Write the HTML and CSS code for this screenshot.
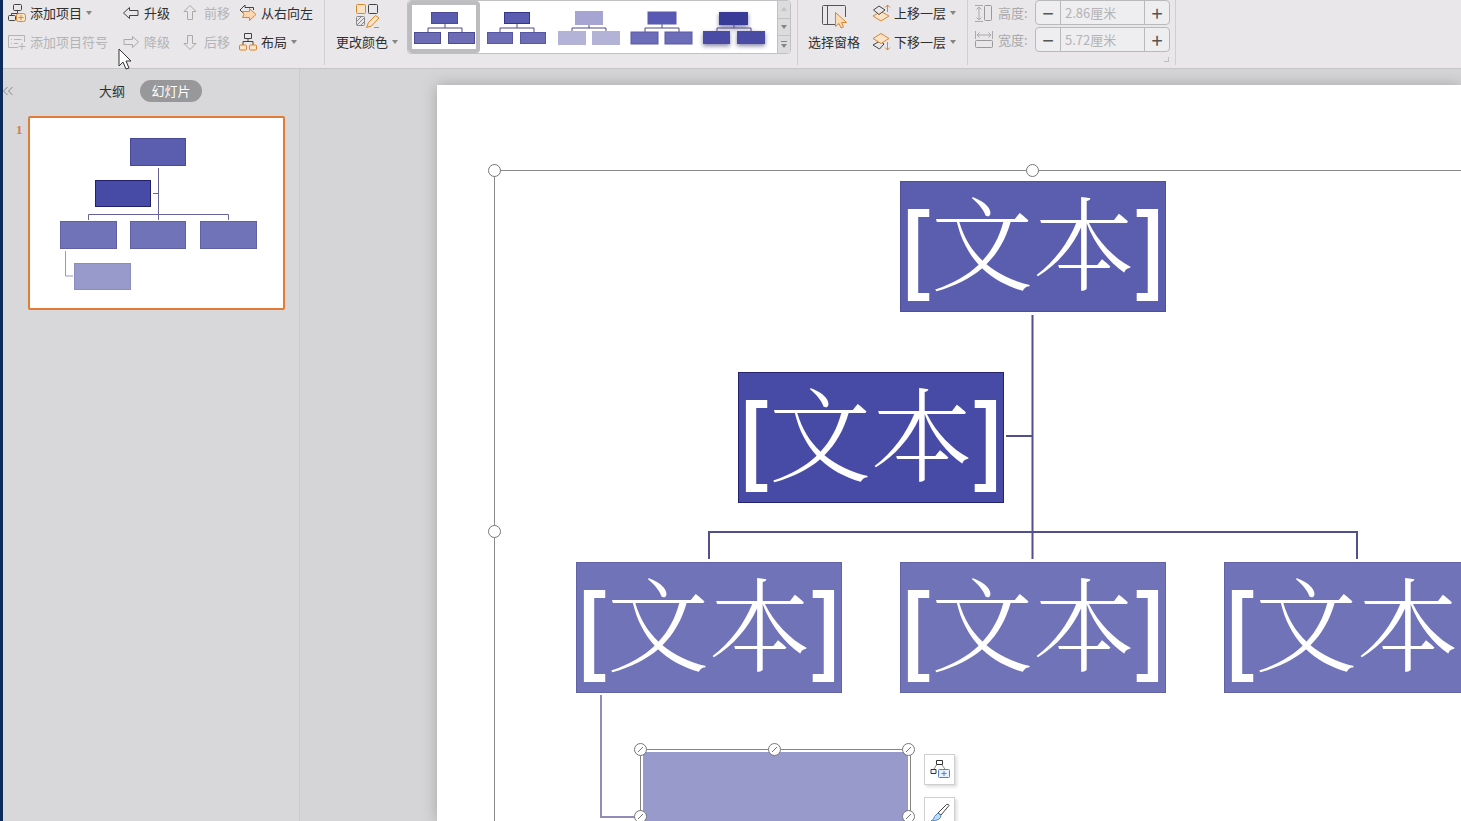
FILE: index.html
```html
<!DOCTYPE html>
<html lang="zh-CN">
<head>
<meta charset="utf-8">
<title>演示文稿</title>
<link rel="stylesheet" href="styles.css">
</head>
<body>
<div class="app">
  <header class="ribbon">
    <div class="group outline-tools">
      <button class="tool"><svg class="icon" viewBox="0 0 18 18"><g fill="none" stroke="#444"><rect x="5.500" y=".5" width="8" height="6" rx="1"/><path d="M9.500 6.500v3M3.500 12V9.500H13"/><rect x=".5" y="11.500" width="7" height="5" rx="1"/></g><rect x="8.500" y="9.500" width="9" height="8" rx="2" fill="#fbe3c8" stroke="#d9862e"/><path d="M10.500 13.500h5M13 11v5" stroke="#d9862e"/></svg>添加项目<i class="caret"></i></button>
      <button class="tool"><svg class="icon" viewBox="0 0 18 18"><path d="M1.500 9 7.500 3.500v3h8.500v5H7.500v3z" fill="none" stroke="#444" stroke-linejoin="round"/></svg>升级</button>
      <button class="tool" disabled><svg class="icon" viewBox="0 0 18 18"><path d="M8 1.500 2 7.500h3.500v8h5v-8H14z" fill="none" stroke="#aaa" stroke-linejoin="round"/></svg>前移</button>
      <button class="tool"><svg class="icon" viewBox="0 0 18 18"><path d="M1 6 6 1v2.500h8.500V6M1 6l4 4" fill="none" stroke="#444"/><path d="M3.500 7.500h7v-3l6.500 6-6.500 6v-3h-7l1.500-3z" fill="#fbd6ae" stroke="#d9862e" stroke-linejoin="round"/></svg>从右向左</button>
      <button class="tool" disabled><svg class="icon" viewBox="0 0 18 18"><path d="M16.500 9V2.500H.5v12H10M3 6.500h1M6 6.500h7.500M3 10.500h1M6 10.500h4M14 10v7M10.500 13.500h7" fill="none" stroke="#b4b3b5"/></svg>添加项目符号</button>
      <button class="tool" disabled><svg class="icon" viewBox="0 0 18 18"><path d="M16.500 9 10.500 3.500v3H2v5h8.500v3z" fill="none" stroke="#aaa" stroke-linejoin="round"/></svg>降级</button>
      <button class="tool" disabled><svg class="icon" viewBox="0 0 18 18"><path d="M8 16.500 2 10.500h3.500v-8h5v8H14z" fill="none" stroke="#aaa" stroke-linejoin="round"/></svg>后移</button>
      <button class="tool"><svg class="icon" viewBox="0 0 18 18"><path d="M5.500.5h7v5h-7zM9 5.500v3M4 12V8.500h10V12" fill="none" stroke="#444"/><rect x=".5" y="12" width="7" height="5" rx="1" fill="#fbe3c8" stroke="#d9862e"/><rect x="10.500" y="12" width="7" height="5" rx="1" fill="#fbe3c8" stroke="#d9862e"/></svg>布局<i class="caret"></i></button>
    </div>

    <div class="group style-tools">
      <button class="tool big"><svg class="icon-big" viewBox="0 0 26 26"><rect x="2.500" y="2.500" width="9" height="9" rx="1" fill="#fbe3c8" stroke="#d9862e"/><rect x="14.500" y="2.500" width="9" height="9" rx="1" fill="none" stroke="#444"/><rect x="2.500" y="14.500" width="8" height="9" rx="1" fill="none" stroke="#888"/><path d="m3 19 4-4M3 23l7-7M7 23l3-3" stroke="#888"/><path d="m12.500 25.500 2-5 7-7 3.500 2.500-7.500 8zM20 25.500h5" fill="#fbe3c8" stroke="#d9862e" stroke-linejoin="round"/></svg><span>更改颜色<i class="caret"></i></span></button>
      <div class="gallery">
        <button class="style-item selected" aria-label="样式 1"><svg viewBox="0 0 62 34"><path d="M31 12v4M14 20v-4h34v4" fill="none" stroke="#504b85"/><g fill="#6c6db5" stroke="#4b4c94"><rect x="17.500" y=".5" width="26" height="11" fill="#595caf"/><rect x=".5" y="20.500" width="26" height="11"/><rect x="34.500" y="20.500" width="26" height="11"/></g></svg></button>
        <button class="style-item" aria-label="样式 2"><svg viewBox="0 0 62 34"><path d="M31 12v4M14 20v-4h34v4" fill="none" stroke="#504b85"/><g fill="#6c6db5" stroke="#5556a4"><rect x="18.500" y=".5" width="25" height="11" fill="#595caf" stroke="#34368a"/><rect x="1.500" y="20.500" width="25" height="11"/><rect x="34.500" y="20.500" width="25" height="11"/></g></svg></button>
        <button class="style-item" aria-label="样式 3"><svg viewBox="0 0 62 34"><path d="M31 12v4M14 20v-4h34v4" fill="none" stroke="#504b85"/><g fill="#b3b2d7"><rect x="17" y="-1" width="28" height="14" fill="#a5a4d2"/><rect x="0" y="19" width="28" height="14"/><rect x="34" y="19" width="28" height="14"/></g></svg></button>
        <button class="style-item" aria-label="样式 4"><svg viewBox="0 0 62 34"><path d="M31 12v4M14 20v-4h34v4" fill="none" stroke="#504b85"/><g fill="#6c6db9" stroke="#5858a8"><rect x="17" y="0" width="28" height="12" fill="#5759b4"/><rect x="0" y="20" width="27" height="12"/><rect x="34" y="20" width="27" height="12"/></g></svg></button>
        <button class="style-item raised" aria-label="样式 5"><svg viewBox="0 0 62 34"><path d="M31 12v4M14 20v-4h34v4" fill="none" stroke="#504b85"/><g fill="#4a4ba4"><rect x="16" y="0" width="29" height="13" fill="#383a98"/><rect x="0" y="19" width="27" height="13"/><rect x="34" y="19" width="28" height="13"/></g></svg></button>
        <div class="gallery-scroll">
          <button aria-label="上翻" disabled><i class="caret up"></i></button>
          <button aria-label="下翻"><i class="caret"></i></button>
          <button aria-label="更多"><i class="more"></i><i class="caret"></i></button>
        </div>
      </div>
    </div>

    <div class="group arrange-tools">
      <button class="tool big"><svg class="icon-big" viewBox="0 0 26 26"><path d="M14 22.500H2.500a1 1 0 0 1-1-1v-17a1 1 0 0 1 1-1h21a1 1 0 0 1 1 1V15M6.500 3.500v19" fill="none" stroke="#555"/><path d="M14.500 10.500v14l3.500-3 2 4.500 2.500-1-2-4.500h5z" fill="#fbdcb8" stroke="#d9862e" stroke-linejoin="round"/></svg><span>选择窗格</span></button>
      <div class="stack">
        <button class="tool"><svg class="icon" viewBox="0 0 18 18"><path d="m1 12 8-4.500 8 4.500-8 5z" fill="#fbe3c8" stroke="#d9862e"/><path d="m1.500 6 5.500-4 6 4-6 4.500z" fill="#e9e7e9" stroke="#444"/><path d="M15.500 8V1M13 3.500 15.500 1 18 3.500" fill="none" stroke="#d9862e"/></svg>上移一层<i class="caret"></i></button>
        <button class="tool"><svg class="icon" viewBox="0 0 18 18"><path d="m1 12 7-4 4 3-4.500 5z" fill="none" stroke="#444"/><path d="m1 5.500 8-5 8 5-8 5z" fill="#fbe3c8" stroke="#d9862e"/><path d="M15.500 9v8M13 14.500l2.500 2.500 2.500-2.500" fill="none" stroke="#d9862e"/></svg>下移一层<i class="caret"></i></button>
      </div>
    </div>

    <div class="group size-tools">
      <div class="size-row"><svg class="icon" viewBox="0 0 18 18"><path d="M0 1.500h8M0 17.500h8M4 3v13M1.500 5.500 4 3l2.500 2.500M1.500 13.500 4 16l2.500-2.500" fill="none" stroke="#aaa"/><rect x="9.500" y="1.500" width="7" height="15" rx="1" fill="none" stroke="#999"/></svg><label for="h">高度:</label><div class="stepper"><button aria-label="减小高度">−</button><input id="h" value="2.86厘米"><button aria-label="增大高度">+</button></div></div>
      <div class="size-row"><svg class="icon" viewBox="0 0 18 18"><path d="M.5 0v8M17.500 0v8M2 4h14M4.500 1.500 2 4l2.500 2.500M13.500 1.500 16 4l-2.500 2.500" fill="none" stroke="#aaa"/><rect x=".5" y="9.500" width="17" height="7" rx="1" fill="none" stroke="#999"/></svg><label for="w">宽度:</label><div class="stepper"><button aria-label="减小宽度">−</button><input id="w" value="5.72厘米"><button aria-label="增大宽度">+</button></div></div>
      <i class="launcher"></i>
    </div>
    <svg class="cursor" viewBox="0 0 14 22"><path d="M1 1v17l4-4 3 7 3-1-3-7h5z" fill="#fff" stroke="#333"/></svg>
  </header>

  <div class="workspace">
    <aside class="panel">
      <div class="panel-head">
        <button class="collapse" aria-label="收起"><svg viewBox="0 0 12 10"><path d="M4.500 1 .5 5l4 4M9.500 1l-4 4 4 4" fill="none" stroke="#888"/></svg></button>
        <button class="tab">大纲</button>
        <button class="tab active">幻灯片</button>
      </div>
      <div class="slide-row">
        <span class="slide-no">1</span>
        <button class="slide-thumb" aria-label="幻灯片 1">
          <svg viewBox="0 0 253 190">
            <path d="M128.500 50v52M123 75.500h6M58.500 102v-5.500h140v5.500" fill="none" stroke="#66629a"/>
            <path d="M35.500 133v25H43" fill="none" stroke="#9997bd"/>
            <rect x="100.500" y="20.500" width="55" height="27" fill="#5b5eaf" stroke="#484a96"/>
            <rect x="65.500" y="62.500" width="55" height="26" fill="#474ba5" stroke="#20206e"/>
            <g fill="#7073b8" stroke="#6061a5"><rect x="30.500" y="103.500" width="56" height="27"/><rect x="100.500" y="103.500" width="55" height="27"/><rect x="170.500" y="103.500" width="56" height="27"/></g>
            <rect x="44.500" y="145.500" width="56" height="26" fill="#989acc" stroke="#8b8dc1"/>
          </svg>
        </button>
      </div>
    </aside>

    <main class="canvas">
      <div class="slide">
        <div class="frame"></div>
        <svg class="links" viewBox="0 0 1024 736">
          <g fill="none" stroke-width="2"><path d="M595.500 230v244M569 351h26M272 474v-27h648v27" stroke="#514f8d"/><path d="M164 610v122h40" stroke="#8f8db8"/></g>
        </svg>
        <div class="node n1"><b>[</b><span>文本</span><b>]</b></div>
        <div class="node assistant n2"><b>[</b><span>文本</span><b>]</b></div>
        <div class="node child n3"><b>[</b><span>文本</span><b>]</b></div>
        <div class="node child n4"><b>[</b><span>文本</span><b>]</b></div>
        <div class="node child n5"><b>[</b><span>文本</span></div>
        <div class="node-selection"><div class="node-fill"></div></div>
        <i class="handle f1"></i><i class="handle f2"></i><i class="handle f3"></i>
        <i class="handle lock s1"></i><i class="handle lock s2"></i><i class="handle lock s3"></i><i class="handle lock s4"></i><i class="handle lock s5"></i>
        <div class="floating">
          <button aria-label="添加项目"><svg viewBox="0 0 20 20"><path d="M6.500.5h6v4h-6zM1 9.500h5v4H1z" fill="none" stroke="#333"/><path d="M6.500 5 4 9M12 5l3 4" stroke="#888"/><rect x="8.500" y="9.500" width="11" height="8" rx="1" fill="#e7f0fc" stroke="#4e83cc"/><path d="M14 11v5M11.500 13.500h5" stroke="#4e83cc"/></svg></button>
          <button aria-label="格式"><svg viewBox="0 0 20 20"><path d="m8 10 8.500-8.500q2-1 2.500 1L11 12z" fill="#fff" stroke="#444"/><path d="M1 18q3-1 3.500-4.500L8 10l3 2.500q0 5-10 5.500z" fill="#bfdcf7" stroke="#4e83cc"/></svg></button>
        </div>
      </div>
    </main>
  </div>
</div>
</body>
</html>
```
FILE: styles.css
```css
* { box-sizing: border-box; }
body {
  margin: 0;
  font: 13px/18px "Noto Sans CJK SC", sans-serif;
  font-weight: 400;
  color: #303030;
  overflow: hidden;
}
button { font: inherit; color: inherit; background: none; border: 0; padding: 0; margin: 0; }
svg { display: block; overflow: visible; flex: none; }

.app {
  display: flex;
  flex-direction: column;
  height: 100vh;
  border-left: 3px solid #0d2a5c;
  background: #d8d7d9;
}

.ribbon {
  position: relative;
  z-index: 1;
  display: flex;
  flex: none;
  background: #e9e7e9;
  border-bottom: 1px solid #c6c5c7;
  height: 69px;
}
.group { border-right: 1px solid #cfced0; margin-bottom: 3px; flex: none; }
.tool { display: flex; align-items: center; gap: 4px; white-space: nowrap; }
.tool:disabled { color: #b4b3b5; }
.icon { width: 18px; height: 18px; }
.icon-big { width: 26px; height: 26px; }
.caret {
  display: inline-block;
  border: 3px solid transparent;
  border-top: 4px solid #858585;
  border-bottom: 0;
}
.caret.up { border-top: 0; border-bottom: 4px solid #c4c3c5; }

.outline-tools {
  display: grid;
  grid-template-columns: 114px 60px 57px 76px;
  grid-template-rows: 26px 32px;
  padding-left: 5px;
  width: 322px;
}

.style-tools { display: flex; width: 473px; padding-left: 11px; }
.big { flex-direction: column; height: 56px; gap: 4px; padding-top: 2px; }
.big span { display: flex; align-items: center; gap: 4px; line-height: 20px; }
.gallery {
  display: flex;
  align-self: flex-start;
  height: 54px;
  margin-left: 9px;
  border: 1px solid #c1c0c2;
  border-radius: 4px;
  background: #fff;
  overflow: hidden;
}
.style-item { width: 73px; padding: 4px 5px 0 6px; }
.style-item:nth-child(even) { width: 72px; }
.style-item svg { width: 62px; height: 34px; }
.style-item.selected { width: 72px; border: 4px solid #bdbcbe; border-radius: 4px; padding: 4px 0 0 2px; }
.style-item.raised svg { filter: drop-shadow(0 2px 2px #8886a8); }
.gallery-scroll { display: flex; flex-direction: column; width: 13px; margin-left: 7px; background: #dcdbdd; border-left: 1px solid #c1c0c2; }
.gallery-scroll button { flex: 1; display: flex; flex-direction: column; gap: 2px; align-items: center; justify-content: center; }
.gallery-scroll button + button { border-top: 1px solid #c1c0c2; }
.more { width: 6px; height: 1px; background: #858585; }

.arrange-tools { display: flex; width: 170px; padding-left: 10px; gap: 12px; }
.stack { display: grid; grid-template-rows: 26px 32px; align-content: start; }

.size-tools { position: relative; width: 208px; padding-left: 7px; }
.size-row { display: flex; align-items: center; height: 25px; margin-bottom: 2px; color: #aaa9ab; }
.size-row label { width: 37px; margin: 0 0 0 5px; }
.stepper {
  display: flex;
  width: 135px;
  height: 25px;
  border: 1px solid #b9b8ba;
  border-radius: 4px;
  background: #eeedef;
}
.stepper button { width: 24px; font-size: 20px; line-height: 22px; color: #555; }
.stepper input {
  flex: 1;
  min-width: 0;
  font: inherit;
  color: #b4b3b5;
  background: none;
  border: solid #b9b8ba;
  border-width: 0 1px;
  padding: 0 4px;
}
.launcher { position: absolute; right: 6px; bottom: 3px; width: 5px; height: 5px; border: solid #c0bfc1; border-width: 0 1px 1px 0; }
.cursor { position: absolute; left: 115px; top: 48px; width: 14px; height: 22px; }

.workspace { display: flex; flex: 1; min-height: 0; }
.panel { width: 297px; flex: none; border-right: 1px solid #cbcacc; }
.panel-head { display: flex; align-items: center; height: 44px; }
.collapse { width: 12px; height: 10px; }
.collapse svg { width: 12px; height: 10px; }
.tab { margin-left: 84px; }
.tab.active { margin-left: 15px; width: 62px; height: 22px; border-radius: 11px; background: #989799; color: #fff; }
.slide-row { display: flex; padding-top: 3px; }
.slide-no { width: 25px; padding: 5px 0 0 13px; font: bold 13px/18px "Liberation Serif", serif; color: #e07848; }
.slide-thumb { border: 2px solid #e27b38; border-radius: 2px; background: #fff; width: 257px; }
.slide-thumb svg { width: 253px; height: 190px; }

.canvas { flex: 1; min-width: 0; overflow: hidden; padding: 16px 0 0 137px; background: #d5d4d6; }
.slide { position: relative; min-height: 100%; background: #fff; box-shadow: 0 0 14px #a5a4a6; }
.frame { position: absolute; left: 57px; top: 85px; right: -40px; bottom: -40px; border: 1px solid #8a8a8a; }
.links { position: absolute; left: 0; top: 0; width: 1024px; height: 736px; }
.node {
  position: absolute;
  display: flex;
  align-items: center;
  padding-left: 1px;
  width: 266px;
  height: 131px;
  border: 1px solid #4e5099;
  background: #5b5eaf;
  color: #fff;
  font: 102px/130px "Noto Serif CJK SC", "AR PL UMing CN", "Noto Sans CJK SC", serif;
  font-weight: 300;
  white-space: nowrap;
}
.node b { width: 29px; font: 97px/130px "Liberation Sans", sans-serif; -webkit-text-stroke: 2px #fff; }
.node b:last-child { text-align: right; }
.node span { padding-bottom: 15px; }
.assistant { background: #474ba5; border-color: #23236f; }
.child { background: #7073b8; border-color: #6263a5; }
.n1 { left: 463px; top: 96px; }
.n2 { left: 301px; top: 287px; }
.n3 { left: 139px; top: 477px; }
.n4 { left: 463px; top: 477px; }
.n5 { left: 787px; top: 477px; }
.node-selection { position: absolute; left: 203px; top: 664px; width: 271px; height: 133px; border: 1px solid #858585; padding: 2px; background: #fff; }
.node-fill { height: 100%; background: #989acc; }
.handle { position: absolute; width: 13px; height: 13px; border: 1px solid #777; border-radius: 50%; background: #fff; }
.lock { background: linear-gradient(135deg, #fff 45%, #777 46%, #777 54%, #fff 55%) center / 5px 5px no-repeat #fff; }
.f1 { left: 51px; top: 79px; }
.f2 { left: 589px; top: 79px; }
.f3 { left: 51px; top: 440px; }
.s1 { left: 197px; top: 658px; }
.s2 { left: 331px; top: 658px; }
.s3 { left: 465px; top: 658px; }
.s4 { left: 197px; top: 725px; }
.s5 { left: 465px; top: 725px; }
.floating { position: absolute; left: 487px; top: 669px; display: flex; flex-direction: column; gap: 12px; }
.floating button { width: 31px; height: 31px; display: grid; place-items: center; border: 1px solid #cfcfcf; background: #fff; box-shadow: 2px 2px 3px #ddd; }
.floating svg { width: 20px; height: 20px; }
```
